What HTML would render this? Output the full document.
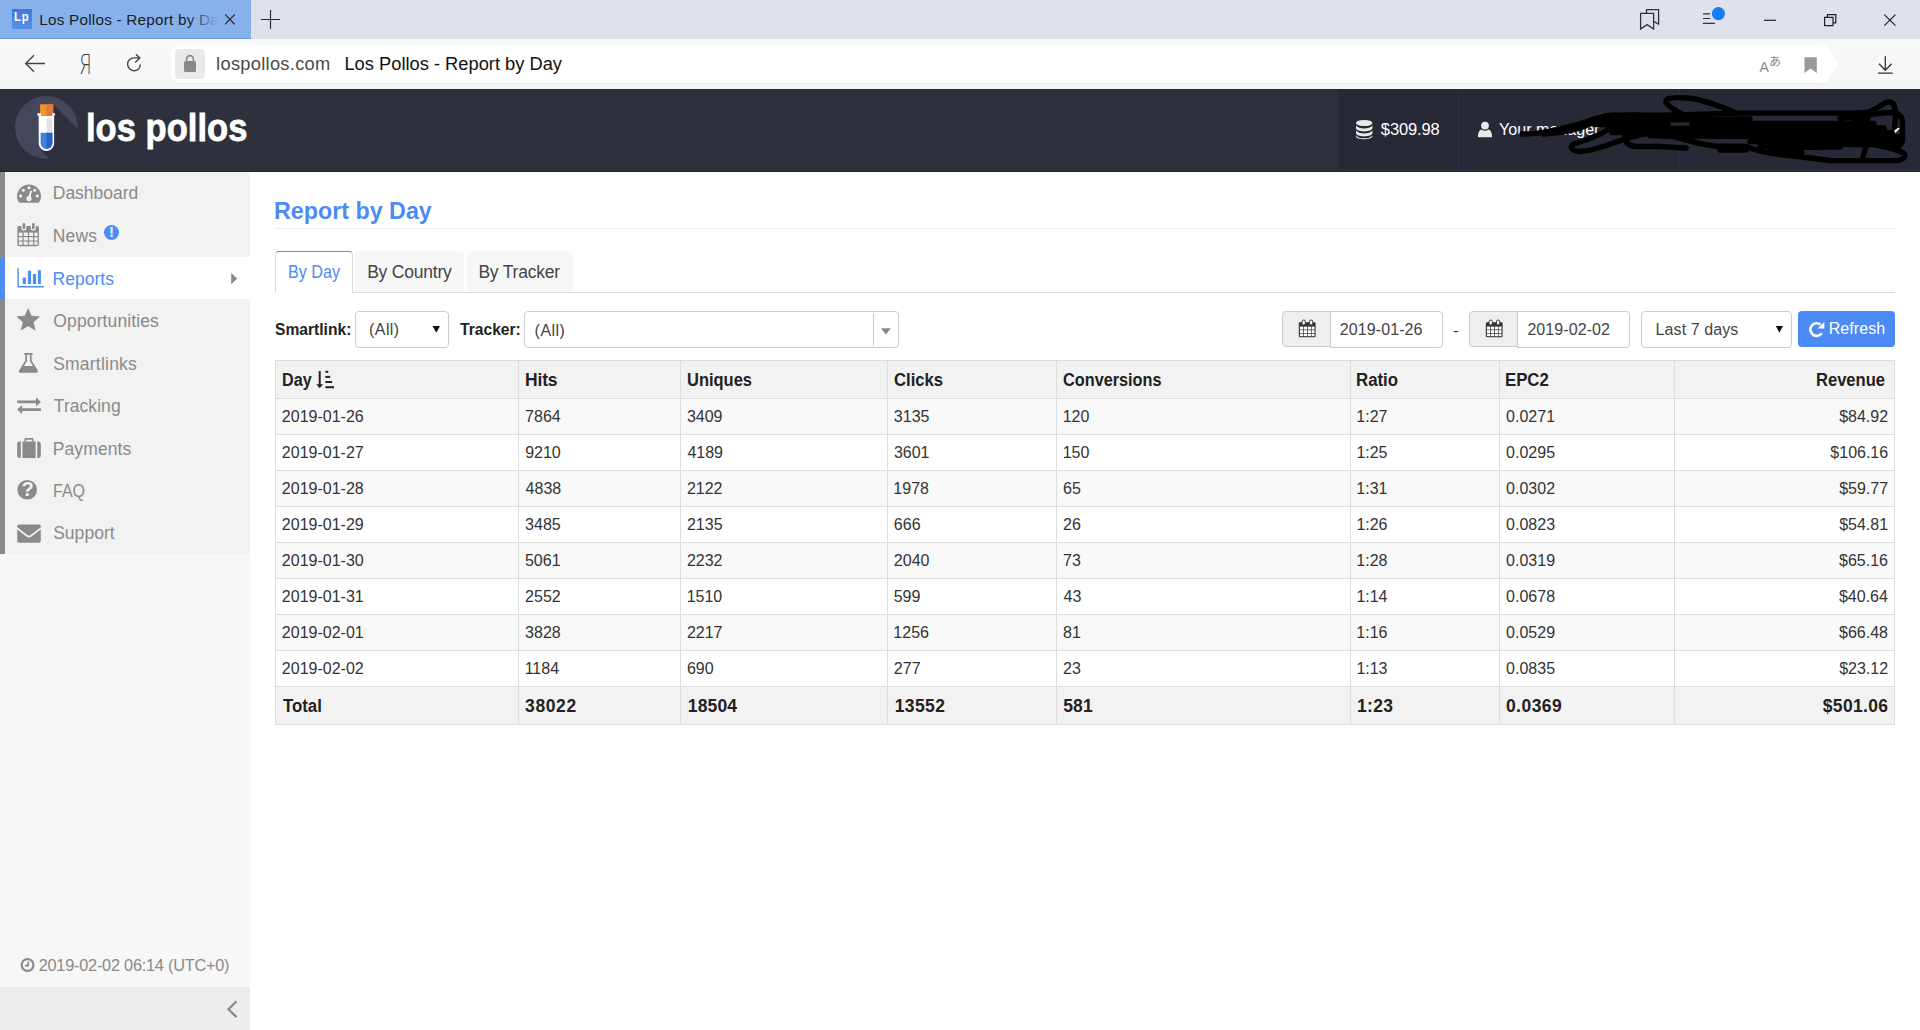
<!DOCTYPE html>
<html lang="en">
<head>
<meta charset="utf-8">
<title>Los Pollos - Report by Day</title>
<style>
*{box-sizing:border-box;margin:0;padding:0}
html,body{width:1920px;height:1030px;overflow:hidden;background:#fff}
body{font-family:"Liberation Sans",sans-serif;color:#333;font-size:16px;position:relative}
.abs{position:absolute}
svg{display:block}
.t{position:absolute;white-space:nowrap;line-height:1}
#tabbar{left:0;top:0;width:1920px;height:39px;background:#dfe2ea}
#tab{left:0;top:0;width:251px;height:39px;background:#86b1ec;border-bottom:1px solid #6e99d4}
#favicon{left:12px;top:9px;width:20px;height:20px;background:linear-gradient(#3f78d6,#5b8fe4);overflow:hidden}
#addr{left:0;top:39px;width:1920px;height:50px;background:linear-gradient(#f8f9fb,#f4f5f6)}
#urlbox{left:171px;top:44.5px;width:1652px;height:38.8px;background:#fff;border-radius:8px 0 0 8px;box-shadow:0 1px 0 #e9e9ea}
#lock{left:175px;top:49px;width:30px;height:30px;background:#e9e9e9;border-radius:4px}
#tabfade{left:188px;top:8px;width:34px;height:24px;background:linear-gradient(to right,rgba(134,177,236,0),rgba(134,177,236,1) 90%)}
#hdr{left:0;top:89px;width:1920px;height:83px;background:#2e303e;border-bottom:1px solid #20212f}
#hdr-r{left:1338px;top:89px;width:582px;height:81px;background:#272937}
#side{left:0;top:172px;width:250px;height:858px;background:#f7f7f7}
#menu{left:0;top:172px;width:250px;height:382px;background:#f2f2f2;border-left:5px solid #8a8a8a}
#act{left:0;top:257px;width:250px;height:42px;background:#fff;border-left:5px solid #4d8df6}
#collapse{left:0;top:987px;width:250px;height:43px;background:#ededed}
#hr1{left:275px;top:228px;width:1620px;height:1px;background:#eee}
#tabline{left:275px;top:292px;width:1620px;height:1px;background:#ddd}
.tb{position:absolute;top:251px;height:41px;background:#f7f7f7;border-radius:4px 4px 0 0}
#tb1{left:275px;width:78px;height:42px;background:#fff;border:1px solid #ddd;border-top:1.5px solid #4d8df6;border-bottom:none}
.box{position:absolute;top:311px;height:37px;border:1px solid #ccc;border-radius:4px;background:#fff}
.addon{background:#eee;border-radius:4px 0 0 4px;height:36px}
#refresh{left:1798px;top:311px;width:97px;height:36px;background:#4c8bf5;border-radius:4px}
#tbl{position:absolute;left:275px;top:360px;width:1619px;border-collapse:collapse;table-layout:fixed}
#tbl td{border:1px solid #ddd;height:36px;padding:0}
#tbl tr.h td{height:38px;background:#f2f2f2}
#tbl tr.o td{background:#f9f9f9}
#tbl tr.f td{height:38px;background:#f2f2f2}
</style>
</head>
<body>

<div class="abs" id="tabbar"></div>
<div class="abs" id="tab"></div>
<div class="abs" id="favicon"><span style="position:absolute;left:2.3px;top:-1.7px;font-size:13.4px;line-height:20px;font-weight:bold;color:#fff;letter-spacing:.9px;transform:scaleX(.84);transform-origin:0 0">Lp</span></div>
<div class="abs" id="addr"></div>
<div class="abs" id="urlbox"></div>
<div class="abs" id="lock"></div>
<div class="abs" style="left:78.8px;top:48.9px;font-family:'DejaVu Sans Light','DejaVu Sans',sans-serif;font-weight:200;font-size:27px;line-height:32px;color:#444;transform:scale(.68,.99);transform-origin:0 50%">Я</div>
<div class="abs" style="left:1759.5px;top:59px;font-size:14px;line-height:16px;color:#8a8a8a">A</div>
<div class="abs" style="left:1769px;top:53.5px;font-family:'Liberation Sans','Noto Sans CJK JP',sans-serif;font-size:12px;line-height:16px;color:#8a8a8a">あ</div>
<div class="abs" id="hdr"></div>
<div class="abs" id="hdr-r"></div>
<div class="abs" id="side"></div>
<div class="abs" id="menu"></div>
<div class="abs" id="act"></div>
<div class="abs" id="collapse"></div>
<div class="abs" id="hr1"></div>
<div class="abs" id="tabline"></div>
<div class="tb" id="tb1"></div>
<div class="tb" style="left:355px;width:109px"></div>
<div class="tb" style="left:467px;width:106px"></div>
<div class="box" style="left:355px;width:94px"></div>
<div class="box" style="left:524px;width:375px"></div>
<div class="box addon" style="left:1282px;width:49px"></div>
<div class="box" style="left:1330px;width:113px;border-radius:0 4px 4px 0"></div>
<div class="box addon" style="left:1469px;width:49px"></div>
<div class="box" style="left:1517px;width:113px;border-radius:0 4px 4px 0"></div>
<div class="box" style="left:1641px;width:151px"></div>
<div class="abs" id="refresh"></div>
<table id="tbl"><colgroup><col style="width:243px"><col style="width:162px"><col style="width:207px"><col style="width:169px"><col style="width:294px"><col style="width:149px"><col style="width:175px"><col style="width:220px"></colgroup>
<tr class="h"><td><div class="t" id="hd" style="font-size:17.5px;top:11.34px;font-weight:bold;color:#222;left:6.07px;transform:scaleX(0.9230);transform-origin:0 0">Day</div></td><td><div class="t" id="hh" style="font-size:17.5px;top:11.34px;font-weight:bold;color:#222;letter-spacing:-0.122px;left:249.38px">Hits</div></td><td><div class="t" id="hu" style="font-size:17.5px;top:11.34px;font-weight:bold;color:#222;left:411.07px;transform:scaleX(0.9417);transform-origin:0 0">Uniques</div></td><td><div class="t" id="hc" style="font-size:17.5px;top:11.34px;font-weight:bold;color:#222;left:618.52px;transform:scaleX(0.9517);transform-origin:0 0">Clicks</div></td><td><div class="t" id="hv" style="font-size:17.5px;top:11.34px;font-weight:bold;color:#222;left:787.90px;transform:scaleX(0.9297);transform-origin:0 0">Conversions</div></td><td><div class="t" id="hr" style="font-size:17.5px;top:11.34px;font-weight:bold;color:#222;left:1080.98px;transform:scaleX(0.9616);transform-origin:0 0">Ratio</div></td><td><div class="t" id="he" style="font-size:17.5px;top:11.34px;font-weight:bold;color:#222;left:1229.98px;transform:scaleX(0.9580);transform-origin:0 0">EPC2</div></td><td><div class="t" id="hrev" style="font-size:17.5px;top:11.34px;font-weight:bold;color:#222;left:1540.01px;transform:scaleX(0.9459);transform-origin:0 0">Revenue</div></td></tr>
<tr class="o"><td><div class="t" id="r0c0" style="font-size:16px;top:48.36px;color:#333;left:6.37px">2019-01-26</div></td><td><div class="t" id="r0c1" style="font-size:16px;top:48.36px;color:#333;left:249.59px">7864</div></td><td><div class="t" id="r0c2" style="font-size:16px;top:48.36px;color:#333;left:411.43px">3409</div></td><td><div class="t" id="r0c3" style="font-size:16px;top:48.36px;color:#333;left:618.33px">3135</div></td><td><div class="t" id="r0c4" style="font-size:16px;top:48.36px;color:#333;left:787.15px">120</div></td><td><div class="t" id="r0c5" style="font-size:16px;top:48.36px;color:#333;left:1080.86px">1:27</div></td><td><div class="t" id="r0c6" style="font-size:16px;top:48.36px;color:#333;left:1230.62px">0.0271</div></td><td><div class="t" id="r0c7" style="font-size:16px;top:48.36px;color:#333;right:6.44px">$84.92</div></td></tr>
<tr><td><div class="t" id="r1c0" style="font-size:16px;top:84.36px;color:#333;left:6.34px">2019-01-27</div></td><td><div class="t" id="r1c1" style="font-size:16px;top:84.36px;color:#333;left:249.63px">9210</div></td><td><div class="t" id="r1c2" style="font-size:16px;top:84.36px;color:#333;left:411.93px">4189</div></td><td><div class="t" id="r1c3" style="font-size:16px;top:84.36px;color:#333;left:618.42px">3601</div></td><td><div class="t" id="r1c4" style="font-size:16px;top:84.36px;color:#333;left:787.16px">150</div></td><td><div class="t" id="r1c5" style="font-size:16px;top:84.36px;color:#333;left:1080.89px">1:25</div></td><td><div class="t" id="r1c6" style="font-size:16px;top:84.36px;color:#333;left:1230.60px">0.0295</div></td><td><div class="t" id="r1c7" style="font-size:16px;top:84.36px;color:#333;right:6.34px">$106.16</div></td></tr>
<tr class="o"><td><div class="t" id="r2c0" style="font-size:16px;top:120.36px;color:#333;left:6.37px">2019-01-28</div></td><td><div class="t" id="r2c1" style="font-size:16px;top:120.36px;color:#333;left:250.09px">4838</div></td><td><div class="t" id="r2c2" style="font-size:16px;top:120.36px;color:#333;left:411.40px">2122</div></td><td><div class="t" id="r2c3" style="font-size:16px;top:120.36px;color:#333;left:617.86px">1978</div></td><td><div class="t" id="r2c4" style="font-size:16px;top:120.36px;color:#333;left:787.59px">65</div></td><td><div class="t" id="r2c5" style="font-size:16px;top:120.36px;color:#333;left:1080.86px">1:31</div></td><td><div class="t" id="r2c6" style="font-size:16px;top:120.36px;color:#333;left:1230.62px">0.0302</div></td><td><div class="t" id="r2c7" style="font-size:16px;top:120.36px;color:#333;right:6.44px">$59.77</div></td></tr>
<tr><td><div class="t" id="r3c0" style="font-size:16px;top:156.36px;color:#333;left:6.34px">2019-01-29</div></td><td><div class="t" id="r3c1" style="font-size:16px;top:156.36px;color:#333;left:249.61px">3485</div></td><td><div class="t" id="r3c2" style="font-size:16px;top:156.36px;color:#333;left:411.44px">2135</div></td><td><div class="t" id="r3c3" style="font-size:16px;top:156.36px;color:#333;left:618.37px">666</div></td><td><div class="t" id="r3c4" style="font-size:16px;top:156.36px;color:#333;left:787.60px">26</div></td><td><div class="t" id="r3c5" style="font-size:16px;top:156.36px;color:#333;left:1080.89px">1:26</div></td><td><div class="t" id="r3c6" style="font-size:16px;top:156.36px;color:#333;left:1230.60px">0.0823</div></td><td><div class="t" id="r3c7" style="font-size:16px;top:156.36px;color:#333;right:6.40px">$54.81</div></td></tr>
<tr class="o"><td><div class="t" id="r4c0" style="font-size:16px;top:192.36px;color:#333;left:6.37px">2019-01-30</div></td><td><div class="t" id="r4c1" style="font-size:16px;top:192.36px;color:#333;left:249.45px">5061</div></td><td><div class="t" id="r4c2" style="font-size:16px;top:192.36px;color:#333;left:411.40px">2232</div></td><td><div class="t" id="r4c3" style="font-size:16px;top:192.36px;color:#333;left:618.37px">2040</div></td><td><div class="t" id="r4c4" style="font-size:16px;top:192.36px;color:#333;left:787.59px">73</div></td><td><div class="t" id="r4c5" style="font-size:16px;top:192.36px;color:#333;left:1080.86px">1:28</div></td><td><div class="t" id="r4c6" style="font-size:16px;top:192.36px;color:#333;left:1230.62px">0.0319</div></td><td><div class="t" id="r4c7" style="font-size:16px;top:192.36px;color:#333;right:6.56px">$65.16</div></td></tr>
<tr><td><div class="t" id="r5c0" style="font-size:16px;top:228.36px;color:#333;left:6.34px">2019-01-31</div></td><td><div class="t" id="r5c1" style="font-size:16px;top:228.36px;color:#333;left:249.60px">2552</div></td><td><div class="t" id="r5c2" style="font-size:16px;top:228.36px;color:#333;left:411.14px">1510</div></td><td><div class="t" id="r5c3" style="font-size:16px;top:228.36px;color:#333;left:618.15px">599</div></td><td><div class="t" id="r5c4" style="font-size:16px;top:228.36px;color:#333;left:788.08px">43</div></td><td><div class="t" id="r5c5" style="font-size:16px;top:228.36px;color:#333;left:1080.89px">1:14</div></td><td><div class="t" id="r5c6" style="font-size:16px;top:228.36px;color:#333;left:1230.60px">0.0678</div></td><td><div class="t" id="r5c7" style="font-size:16px;top:228.36px;color:#333;right:6.64px">$40.64</div></td></tr>
<tr class="o"><td><div class="t" id="r6c0" style="font-size:16px;top:264.36px;color:#333;left:6.37px">2019-02-01</div></td><td><div class="t" id="r6c1" style="font-size:16px;top:264.36px;color:#333;left:249.62px">3828</div></td><td><div class="t" id="r6c2" style="font-size:16px;top:264.36px;color:#333;left:411.40px">2217</div></td><td><div class="t" id="r6c3" style="font-size:16px;top:264.36px;color:#333;left:617.86px">1256</div></td><td><div class="t" id="r6c4" style="font-size:16px;top:264.36px;color:#333;left:787.62px">81</div></td><td><div class="t" id="r6c5" style="font-size:16px;top:264.36px;color:#333;left:1080.86px">1:16</div></td><td><div class="t" id="r6c6" style="font-size:16px;top:264.36px;color:#333;left:1230.62px">0.0529</div></td><td><div class="t" id="r6c7" style="font-size:16px;top:264.36px;color:#333;right:6.56px">$66.48</div></td></tr>
<tr><td><div class="t" id="r7c0" style="font-size:16px;top:300.36px;color:#333;left:6.34px">2019-02-02</div></td><td><div class="t" id="r7c1" style="font-size:16px;top:300.36px;color:#333;left:249.16px">1184</div></td><td><div class="t" id="r7c2" style="font-size:16px;top:300.36px;color:#333;left:411.44px">690</div></td><td><div class="t" id="r7c3" style="font-size:16px;top:300.36px;color:#333;left:618.34px">277</div></td><td><div class="t" id="r7c4" style="font-size:16px;top:300.36px;color:#333;left:787.60px">23</div></td><td><div class="t" id="r7c5" style="font-size:16px;top:300.36px;color:#333;left:1080.89px">1:13</div></td><td><div class="t" id="r7c6" style="font-size:16px;top:300.36px;color:#333;left:1230.60px">0.0835</div></td><td><div class="t" id="r7c7" style="font-size:16px;top:300.36px;color:#333;right:6.42px">$23.12</div></td></tr>
<tr class="f"><td><div class="t" id="f0" style="font-size:17.5px;top:337.09px;font-weight:bold;color:#222;left:7.76px;transform:scaleX(0.9601);transform-origin:0 0">Total</div></td><td><div class="t" id="f1" style="font-size:17.5px;top:337.09px;font-weight:bold;color:#222;letter-spacing:0.609px;left:249.56px">38022</div></td><td><div class="t" id="f2" style="font-size:17.5px;top:337.09px;font-weight:bold;color:#222;letter-spacing:0.152px;left:412.30px">18504</div></td><td><div class="t" id="f3" style="font-size:17.5px;top:337.09px;font-weight:bold;color:#222;letter-spacing:0.398px;left:619.13px">13552</div></td><td><div class="t" id="f4" style="font-size:17.5px;top:337.09px;font-weight:bold;color:#222;letter-spacing:0.242px;left:787.63px">581</div></td><td><div class="t" id="f5" style="font-size:17.5px;top:337.09px;font-weight:bold;color:#222;letter-spacing:0.337px;left:1081.50px">1:23</div></td><td><div class="t" id="f6" style="font-size:17.5px;top:337.09px;font-weight:bold;color:#222;letter-spacing:0.465px;left:1230.43px">0.0369</div></td><td><div class="t" id="f7" style="font-size:17.5px;top:337.09px;font-weight:bold;color:#222;letter-spacing:0.336px;right:6.09px">$501.06</div></td></tr>
</table>
<div class="abs" style="left:17.4px;top:478.3px;width:20.4px;text-align:center;font-size:20px;line-height:22px;font-weight:bold;color:#f2f2f2;z-index:5">?</div>
<div class="abs" style="left:104px;top:224px;width:15px;text-align:center;font-size:15px;line-height:16px;font-weight:bold;color:#f2f2f2;z-index:5">!</div>
<div class="t" id="tt" style="font-size:15.3px;top:12.25px;color:#1d1d1f;letter-spacing:0.218px;left:39.28px">Los Pollos - Report by Da</div>
<div class="t" id="url" style="font-size:18.3px;top:54.81px;color:#4a4a4a;letter-spacing:0.282px;left:216.11px">lospollos.com</div>
<div class="t" id="pt" style="font-size:18.3px;top:54.81px;color:#111;letter-spacing:0.004px;left:344.44px">Los Pollos - Report by Day</div>
<div class="t" id="brand" style="font-size:39.5px;top:108.06px;font-weight:bold;color:#fff;-webkit-text-stroke:.8px #fff;left:86.48px;transform:scaleX(0.8754);transform-origin:0 0">los pollos</div>
<div class="t" id="bal" style="font-size:16.5px;top:120.93px;color:#fff;letter-spacing:-0.153px;left:1380.86px">$309.98</div>
<div class="t" id="mgr" style="font-size:16.5px;top:120.93px;color:#fff;left:1499.29px;transform:scaleX(0.9751);transform-origin:0 0">Your manager</div>
<div class="t" id="m0" style="font-size:17.5px;top:184.79px;color:#8a8a8a;letter-spacing:-0.003px;left:52.76px">Dashboard</div>
<div class="t" id="m1" style="font-size:17.5px;top:227.69px;color:#8a8a8a;letter-spacing:0.169px;left:52.76px">News</div>
<div class="t" id="m2" style="font-size:17.5px;top:270.59px;color:#4d8df6;letter-spacing:0.023px;left:52.55px">Reports</div>
<div class="t" id="m3" style="font-size:17.5px;top:312.89px;color:#8a8a8a;letter-spacing:0.120px;left:53.35px">Opportunities</div>
<div class="t" id="m4" style="font-size:17.5px;top:355.89px;color:#8a8a8a;letter-spacing:0.226px;left:53.14px">Smartlinks</div>
<div class="t" id="m5" style="font-size:17.5px;top:397.79px;color:#8a8a8a;letter-spacing:0.055px;left:53.81px">Tracking</div>
<div class="t" id="m6" style="font-size:17.5px;top:440.89px;color:#8a8a8a;letter-spacing:0.099px;left:52.76px">Payments</div>
<div class="t" id="m7" style="font-size:17.5px;top:482.89px;color:#8a8a8a;left:52.83px;transform:scaleX(0.9163);transform-origin:0 0">FAQ</div>
<div class="t" id="m8" style="font-size:17.5px;top:524.79px;color:#8a8a8a;letter-spacing:0.039px;left:53.14px">Support</div>
<div class="t" id="clk" style="font-size:16.3px;top:957.40px;color:#8a8a8a;letter-spacing:-0.221px;left:38.69px">2019-02-02 06:14 (UTC+0)</div>
<div class="t" id="h1" style="font-size:24px;top:198.88px;font-weight:bold;color:#4c8bf5;left:274.17px;transform:scaleX(0.9697);transform-origin:0 0">Report by Day</div>
<div class="t" id="tb1t" style="font-size:17.5px;top:263.89px;color:#4c8bf5;left:287.67px;transform:scaleX(0.9238);transform-origin:0 0">By Day</div>
<div class="t" id="tb2t" style="font-size:17.5px;top:263.89px;color:#444;letter-spacing:-0.222px;left:367.18px">By Country</div>
<div class="t" id="tb3t" style="font-size:17.5px;top:263.89px;color:#444;letter-spacing:-0.204px;left:478.38px">By Tracker</div>
<div class="t" id="l1" style="font-size:16.5px;top:321.03px;font-weight:bold;color:#222;left:274.80px;transform:scaleX(0.9465);transform-origin:0 0">Smartlink:</div>
<div class="t" id="a1" style="font-size:16px;top:322.36px;color:#444;letter-spacing:0.420px;left:369.06px">(All)</div>
<div class="t" id="l2" style="font-size:16.5px;top:321.03px;font-weight:bold;color:#222;left:459.52px;transform:scaleX(0.9473);transform-origin:0 0">Tracker:</div>
<div class="t" id="a2" style="font-size:16px;top:322.66px;color:#444;letter-spacing:0.468px;left:534.61px">(All)</div>
<div class="t" id="d1" style="font-size:16px;top:322.16px;color:#444;letter-spacing:0.096px;left:1339.77px">2019-01-26</div>
<div class="t" id="dash" style="font-size:16px;top:323.36px;color:#333;left:1453.31px">-</div>
<div class="t" id="d2" style="font-size:16px;top:322.16px;color:#444;letter-spacing:0.081px;left:1527.40px">2019-02-02</div>
<div class="t" id="l7" style="font-size:16px;top:322.36px;color:#444;letter-spacing:0.091px;left:1655.61px">Last 7 days</div>
<div class="t" id="rf" style="font-size:16px;top:321.26px;color:#fff;letter-spacing:0.068px;left:1828.71px">Refresh</div>
<div class="abs" id="tabfade"></div>
<!-- ICON OVERLAY -->
<svg class="abs" id="ov" style="left:0;top:0" width="1920" height="1030" viewBox="0 0 1920 1030" fill="none">
<!-- chrome: tab close, plus -->
<g stroke="#2b2b2b" stroke-width="1.2" stroke-linecap="square">
<path d="M225.5 14.8L234.3 24M234.3 14.8L225.5 24"/>
<path d="M261.5 19.5H279.5M270.5 10.5V28.5"/>
</g>
<!-- back, reload -->
<g stroke="#444" stroke-width="1.4" stroke-linecap="butt" stroke-linejoin="miter">
<path d="M45 63.5H26M34 55.2L25.7 63.5L34 71.8"/>
<path d="M140.4 64.4A6.4 6.4 0 1 1 134 57.9H139.4M135.9 54.2L139.8 57.9L135.2 62.4"/>
</g>
<!-- lock -->
<rect x="184" y="61" width="12" height="11" rx="1.5" fill="#8a8a8a"/>
<path d="M186.6 61.5V59A3.4 3.4 0 0 1 193.4 59V61.5" stroke="#8a8a8a" stroke-width="1.6"/>
<!-- bookmarks collection -->
<g stroke="#333" stroke-width="1.3" stroke-linejoin="miter">
<path d="M1646.5 13V9.6H1658.6V24.2L1654.2 21.6"/>
<path d="M1640.6 13.4H1653.6V29L1647.1 24.6L1640.6 29Z"/>
</g>
<!-- menu w/ dot -->
<g stroke="#333" stroke-width="1.2">
<path d="M1703 13.8H1710M1703 18.5H1710.5M1703 23.4H1715"/>
</g>
<circle cx="1718.4" cy="13.6" r="6.6" fill="#157ef7"/>
<!-- window controls -->
<g stroke="#222" stroke-width="1.2">
<path d="M1764 20.3H1776"/>
<path d="M1824.6 17.4H1833V25.6H1824.6ZM1827.4 17.2V14.6H1835.8V22.8H1833.2"/>
<path d="M1884.3 14.6L1895.5 25.6M1895.5 14.6L1884.3 25.6"/>
</g>
<!-- bookmark filled, download -->
<path d="M1804.5 57.3H1816.8V73L1810.6 68.6L1804.5 73Z" fill="#9a9a9a"/>
<g stroke="#333" stroke-width="1.3">
<path d="M1885.3 56.3V70M1879 63.8L1885.3 70.2L1891.6 63.8M1878 73.2H1892.6"/>
</g>

<!-- ===== app header graphics ===== -->
<defs><clipPath id="lc"><circle cx="46.5" cy="127.5" r="31.5"/></clipPath></defs>
<circle cx="46.5" cy="127.5" r="31.5" fill="#44475b"/>
<path d="M53.2 104.5L110 161.3V220H101L40 148.5Z" fill="#2e303e" clip-path="url(#lc)"/>
<!-- cork -->
<rect x="40.1" y="104.3" width="13.1" height="14.2" fill="#f0932b"/>
<rect x="46.5" y="104.3" width="6.7" height="14.2" fill="#de7a35"/>
<!-- tube glass -->
<path d="M37.3 113.2H41V116H52.4V113.2H55V115.4H54.1V143.4A7.7 7.7 0 0 1 38.700 143.400V115.400H37.300Z" fill="#fff"/>
<path d="M40.600 132.800H52.400V143A5.900 5.900 0 0 1 40.600 143Z" fill="#3f84dc"/>
<path d="M46.500 118.500H52.400V132.800H46.500Z" fill="#e2e2e2"/>
<path d="M46.500 132.800H52.400V143A5.900 5.900 0 0 1 46.500 148.900Z" fill="#2a62c9"/>
<!-- dividers -->
<rect x="1458" y="89" width="1" height="83" fill="#30314a" opacity=".8"/>
<rect x="1679" y="89" width="1" height="83" fill="#30314a" opacity=".8"/>
<!-- database icon -->
<g fill="#e9e9e9">
<ellipse cx="1364.2" cy="123" rx="8.2" ry="3.1"/>
<path d="M1356 125.6c1.5 2 4.6 2.9 8.2 2.9s6.700-.9 8.200-2.900v2.700c0 1.700-3.700 3.100-8.200 3.100s-8.200-1.400-8.200-3.100z"/>
<path d="M1356 130.500c1.500 2 4.600 2.900 8.200 2.900s6.700-.9 8.200-2.900v2.700c0 1.700-3.700 3.100-8.200 3.100s-8.200-1.400-8.200-3.100z"/>
<path d="M1356 135.400c1.500 2 4.600 2.900 8.200 2.900s6.700-.9 8.200-2.900v.800c0 1.700-3.700 3.100-8.200 3.100s-8.200-1.400-8.200-3.100z"/>
</g>
<!-- user icon -->
<g fill="#e9e9e9">
<circle cx="1485" cy="125.600" r="3.900"/>
<path d="M1478 137.300c-.3-4.300 1.300-7.300 3.700-7.700 1 .8 2.100 1.200 3.300 1.200s2.300-.4 3.300-1.200c2.400.4 4 3.400 3.700 7.700z"/>
</g>
<!-- user caret remnant -->
<path d="M1893.700 131.500L1896.500 128.200L1900 127.900L1895.500 133Z" fill="#fff"/>
<!-- scribble -->
<g stroke="#000" stroke-width="5.4" stroke-linecap="round" stroke-linejoin="round" fill="none">
<path d="M1522 134C1532 134.300 1545 132.500 1557 129.500C1570 126.500 1580 124 1590 120.500C1597 118 1603 116 1610 115.500C1630 114.500 1650 115.500 1680 115C1700 114.500 1720 113.500 1740 113L1862 113C1872 112.500 1878 107 1883 104C1887 101.500 1892 101 1894 105C1896 110 1895.500 120 1894.500 127"/>
<path d="M1543 134C1556 133.500 1566 132 1575 129.500C1582 127.500 1588 125 1594 122"/>
<path d="M1734 112C1722 107 1708 101.500 1693 98.500C1684 97.500 1672 97.500 1667.500 99C1663 102 1668 106.500 1682 114"/>
<path d="M1840 118.500C1850 117.500 1860 116.500 1866 115.500C1876 113.500 1886 112.500 1892 112.500C1899 113 1902 116 1902.500 122L1902.500 140C1902 144 1900 146 1897 146.500"/>
<path d="M1606 131C1597 136 1584 141 1575 143.500C1569 146 1570 150.500 1580 151.500C1592 151 1606 146 1623 139.500C1635 136 1645 133.500 1655 132"/>
<path d="M1625 136C1625 142 1628 146 1636 146.500L1660 146.500C1670 147 1680 148 1686 148"/>
<path d="M1598 120.500L1700 119.500L1750 119M1853 119L1868 119"/>
<path d="M1596 124.500L1668 125M1692 123.500L1874 123.500"/>
<path d="M1608 129.500L1660 128.500L1884 128"/>
<path d="M1612 132.500L1892 132.500"/>
<path d="M1650 135.500L1673 136.500C1685 140 1700 144.500 1715 146L1747 146.500"/>
<path d="M1680 136L1900 137"/>
<path d="M1750 141.500L1900 141.500M1790 144.500L1898 144.500M1822 147L1840 147M1720 150L1746 150"/>
<path d="M1747 147C1755 150 1765 153 1780 154.500C1795 156 1810 158 1830 160.500L1896 160.600C1905 160 1907 155 1903 152.500C1898 150 1890 148 1876 145"/>
<path d="M1866 146.500L1863 157"/>
<path d="M1760 146.500L1822 147.500M1770 150.500L1802 152"/>
</g>

<!-- ===== sidebar icons ===== -->
<g fill="#8a8a8a">
<!-- dashboard -->
<path d="M19.400 202.700L18.300 201.300C17.500 199.900 17 198.200 17 196.500A12 12 0 0 1 41 196.500C41 198.200 40.500 199.900 39.700 201.300L38.600 202.700Z"/>
<g fill="#f2f2f2"><circle cx="20.700" cy="196" r="1.550"/><circle cx="23.300" cy="190.200" r="1.550"/><circle cx="29" cy="187.700" r="1.550"/><circle cx="34.700" cy="190.200" r="1.550"/><circle cx="37.300" cy="196" r="1.550"/><circle cx="29" cy="198.600" r="2.600"/><path d="M28.200 196.800L30.600 190.600L32.100 191.100L30.300 197.500Z"/></g>
<!-- calendar -->
<rect x="17.400" y="226" width="21.500" height="20.200" rx="1.600"/>
<g fill="#f2f2f2">
<rect x="18.800" y="232.600" width="3.700" height="3.400"/><rect x="23.700" y="232.600" width="4.200" height="3.400"/><rect x="29.100" y="232.600" width="4" height="3.400"/><rect x="34.300" y="232.600" width="3.300" height="3.400"/>
<rect x="18.800" y="237.200" width="3.700" height="3.300"/><rect x="23.700" y="237.200" width="4.200" height="3.300"/><rect x="29.100" y="237.200" width="4" height="3.300"/><rect x="34.300" y="237.200" width="3.300" height="3.300"/>
<rect x="18.800" y="241.600" width="3.700" height="3.200"/><rect x="23.700" y="241.600" width="4.200" height="3.200"/><rect x="29.100" y="241.600" width="4" height="3.200"/><rect x="34.300" y="241.600" width="3.300" height="3.200"/>
<rect x="21.400" y="224" width="5" height="6.400" rx="2"/><rect x="30.800" y="224" width="5" height="6.400" rx="2"/>
</g>
<rect x="22.600" y="223" width="2.600" height="6.300" rx="1.300"/><rect x="32" y="223" width="2.600" height="6.300" rx="1.300"/>
<!-- star -->
<polygon points="28.2,308.7 31.3,316.1 39.3,316.8 33.2,322.0 35.1,329.9 28.2,325.7 21.3,329.9 23.2,322.0 17.1,316.8 25.1,316.1" stroke="#8a8a8a" stroke-width=".8" stroke-linejoin="round"/>
<!-- flask -->
<path d="M24.300 353H32.600V354.800H31.600V360.600L37.600 370.200C38.400 371.600 37.800 372.700 36.300 372.700H20.500C19 372.700 18.400 371.600 19.200 370.200L25.300 360.600V354.800H24.300Z"/>
<path d="M27 354.800H29.900V361.100L32.900 365.900H24L27 361.100Z" fill="#f2f2f2"/>
<!-- exchange -->
<path d="M17.200 400.600H36V397.200L40.900 401.900L36 406.600V403.200H17.200Z"/>
<path d="M40.900 408.300H22.100V404.900L17.200 409.600L22.100 414.300V410.900H40.900Z"/>
<!-- suitcase -->
<path d="M24.400 441.500V439.600C24.400 438.700 25.100 438 26 438H32C32.900 438 33.600 438.700 33.600 439.600V441.500H31.900V439.700H26.100V441.500Z"/>
<path d="M19.700 441.500H20.800V458H19.700C18.300 458 17.200 456.900 17.200 455.500V444C17.200 442.600 18.300 441.500 19.700 441.500ZM22.500 441.500H35.600V458H22.500ZM37.300 441.500H38.300C39.700 441.500 40.800 442.600 40.800 444V455.500C40.800 456.900 39.700 458 38.300 458H37.300Z"/>
<!-- faq circle -->
<circle cx="27.200" cy="489.800" r="9.800"/>
<!-- envelope -->
<path d="M19.200 524.600H38.800C39.900 524.600 40.800 525.500 40.800 526.600V527.300L30.300 535.300C29.500 535.900 28.500 535.900 27.700 535.300L17.200 527.300V526.600C17.200 525.500 18.100 524.600 19.200 524.600ZM17.200 529.500L26.700 536.700C28.100 537.800 29.900 537.800 31.300 536.700L40.800 529.500V540.800C40.800 541.900 39.900 542.800 38.800 542.800H19.200C18.100 542.800 17.200 541.900 17.200 540.800Z"/>
<!-- active arrow -->
<path d="M231.200 273L237.300 278.600L231.200 284.300Z"/>
</g>
<!-- reports bar chart -->
<g fill="#4d8df6">
<path d="M17.400 268.300H18.800V286.100H43.800V287.600H17.400Z"/>
<rect x="22.700" y="277.600" width="3.200" height="6.400"/><rect x="27.900" y="270.800" width="3.200" height="13.200"/><rect x="32.900" y="274" width="3.200" height="10"/><rect x="37.900" y="270.200" width="3" height="13.800"/>
</g>
<!-- news info -->
<circle cx="111.500" cy="232.500" r="7.500" fill="#4d8df6"/>
<!-- clock -->
<circle cx="27.550" cy="965" r="5.900" stroke="#8a8a8a" stroke-width="2.200"/>
<path d="M28.300 961.500V965.600H25" stroke="#8a8a8a" stroke-width="1.600"/>
<!-- collapse chevron -->
<path d="M236.500 1001.300L228.500 1009.200L236.500 1017.100" stroke="#8a8a8a" stroke-width="2.200"/>

<!-- ===== toolbar icons ===== -->
<path d="M432.600 326H440L436.300 332.800Z" fill="#111"/>
<path d="M1775.800 326H1783L1779.400 332.800Z" fill="#111"/>
<rect x="873" y="313" width="1" height="33" fill="#ccc"/>
<path d="M881 328.200H890.800L885.900 334.400Z" fill="#888"/>
<!-- calendar small x2 -->
<g>
<rect x="1298.8" y="322.2" width="16.8" height="15.0" rx="1.300" fill="#333"/>
<g fill="#fff"><rect x="1299.9" y="326.6" width="3.2" height="2.9"/><rect x="1303.8" y="326.6" width="3.2" height="2.9"/><rect x="1307.7" y="326.6" width="3.2" height="2.9"/><rect x="1311.6" y="326.6" width="2.9" height="2.9"/><rect x="1299.9" y="330.2" width="3.2" height="2.8"/><rect x="1303.8" y="330.2" width="3.2" height="2.8"/><rect x="1307.7" y="330.2" width="3.2" height="2.8"/><rect x="1311.6" y="330.2" width="2.9" height="2.8"/><rect x="1299.9" y="333.7" width="3.2" height="2.5"/><rect x="1303.8" y="333.7" width="3.2" height="2.5"/><rect x="1307.7" y="333.7" width="3.2" height="2.5"/><rect x="1311.6" y="333.7" width="2.9" height="2.5"/></g>
<rect x="1302.100" y="320" width="3.200" height="5" rx="1.600" fill="#fff" stroke="#333" stroke-width="1"/><rect x="1309.500" y="320" width="3.200" height="5" rx="1.600" fill="#fff" stroke="#333" stroke-width="1"/>
</g>
<g transform="translate(187,0)">
<rect x="1298.8" y="322.2" width="16.8" height="15.0" rx="1.300" fill="#333"/>
<g fill="#fff"><rect x="1299.9" y="326.6" width="3.2" height="2.9"/><rect x="1303.8" y="326.6" width="3.2" height="2.9"/><rect x="1307.7" y="326.6" width="3.2" height="2.9"/><rect x="1311.6" y="326.6" width="2.9" height="2.9"/><rect x="1299.9" y="330.2" width="3.2" height="2.8"/><rect x="1303.8" y="330.2" width="3.2" height="2.8"/><rect x="1307.7" y="330.2" width="3.2" height="2.8"/><rect x="1311.6" y="330.2" width="2.9" height="2.8"/><rect x="1299.9" y="333.7" width="3.2" height="2.5"/><rect x="1303.8" y="333.7" width="3.2" height="2.5"/><rect x="1307.7" y="333.7" width="3.2" height="2.5"/><rect x="1311.6" y="333.7" width="2.9" height="2.5"/></g>
<rect x="1302.100" y="320" width="3.200" height="5" rx="1.600" fill="#fff" stroke="#333" stroke-width="1"/><rect x="1309.500" y="320" width="3.200" height="5" rx="1.600" fill="#fff" stroke="#333" stroke-width="1"/>
</g>

<!-- refresh icon -->
<path d="M1821.800 333.200A6.300 6.300 0 1 1 1820.600 324.600" stroke="#fff" stroke-width="2.600"/>
<path d="M1824.300 321.900V328.600H1817.600Z" fill="#fff"/>
<!-- sort icon -->
<g fill="#222">
<path d="M318.700 371H320.700V384.200H323.100L319.700 388.300L316.300 384.200H318.700Z"/>
<rect x="325.400" y="370.800" width="2.900" height="2"/><rect x="325.400" y="375.900" width="4.800" height="2"/><rect x="325.400" y="381" width="6.700" height="2"/><rect x="325.400" y="386.200" width="8.600" height="2"/>
</g>
<!-- url box arrow end -->
<path d="M1820 45.5H1826L1839 64.200L1826 84.300H1820Z" fill="#e9e9ea"/><path d="M1820 44.500H1826L1839 63.900L1826 83.300H1820Z" fill="#fff"/>
</svg>
</body>
</html>
